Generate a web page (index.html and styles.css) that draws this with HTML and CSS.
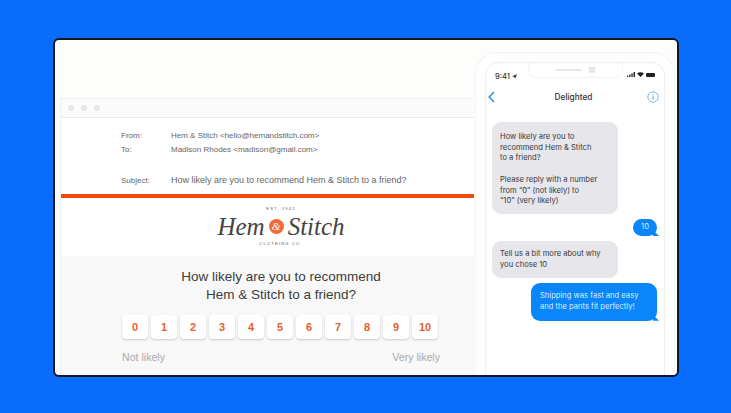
FILE: index.html
```html
<!DOCTYPE html>
<html lang="en">
<head>
  <meta charset="utf-8">
  <meta content="initial-scale=1" name="viewport">
  <title>Delighted - SMS and email survey</title>
  <link rel="stylesheet" href="styles.css">
</head>
<body>
  <main class="card">
    <section class="email">
      <div class="titlebar">
        <span class="dot"></span>
        <span class="dot"></span>
        <span class="dot"></span>
      </div>
      <div class="headers">
        <div class="hrow"><span class="hlabel">From:</span><span>Hem &amp; Stitch &lt;hello@hemandstitch.com&gt;</span></div>
        <div class="hrow"><span class="hlabel">To:</span><span>Madison Rhodes &lt;madison@gmail.com&gt;</span></div>
        <div class="hrow hsubject"><span class="hlabel">Subject:</span><span class="subject">How likely are you to recommend Hem &amp; Stitch to a friend?</span></div>
      </div>
      <div class="rule"></div>
      <div class="brand">
        <div class="brand-small">EST. 1942</div>
        <div class="brand-name">Hem <span class="amp">&amp;</span> Stitch</div>
        <div class="brand-small">CLOTHING CO.</div>
      </div>
      <div class="survey">
        <h2 class="question">How likely are you to recommend<br>Hem &amp; Stitch to a friend?</h2>
        <div class="scale">
          <span class="score">0</span>
          <span class="score">1</span>
          <span class="score">2</span>
          <span class="score">3</span>
          <span class="score">4</span>
          <span class="score">5</span>
          <span class="score">6</span>
          <span class="score">7</span>
          <span class="score">8</span>
          <span class="score">9</span>
          <span class="score">10</span>
        </div>
        <div class="scale-labels"><span>Not likely</span><span>Very likely</span></div>
      </div>
    </section>

    <section class="phone">
      <div class="screen">
        <div class="status">
          <span class="time">9:41 <svg width="5" height="5" viewBox="0 0 5 5"><path d="M0 2.6 5 0 3 5 2.4 2.9z" fill="#333"/></svg></span>
          <div class="notch"><span class="speaker"></span><span class="camera"></span></div>
          <span class="status-icons">
            <svg width="8" height="5" viewBox="0 0 8 5"><path d="M0 3.6h1.3V5H0zM2.2 2.6h1.3V5H2.2zM4.4 1.3h1.3V5H4.4zM6.6 0H8v5H6.6z" fill="#222"/></svg>
            <svg width="7" height="5" viewBox="0 0 7 5"><path d="M3.5 5 0 1.6a5 5 0 0 1 7 0z" fill="#222"/></svg>
            <svg width="9" height="4" viewBox="0 0 9 4"><rect width="9" height="4" rx="1" fill="#222"/></svg>
          </span>
        </div>
        <div class="navbar">
          <svg class="back" width="7" height="12" viewBox="0 0 7 12"><path d="M6 1 1.2 6 6 11" fill="none" stroke="#2f8fe8" stroke-width="1.5"/></svg>
          <span class="contact">Delighted</span>
          <svg class="info" width="12" height="12" viewBox="0 0 12 12"><circle cx="6" cy="6" r="5.2" fill="none" stroke="#5aa5ea" stroke-width=".8"/><path d="M6 5.2v3.4M6 3.2v1" stroke="#4a9be8" stroke-width="1"/></svg>
        </div>
        <div class="thread">
          <div class="bubble in first">How likely are you to<br>recommend Hem &amp; Stitch<br>to a friend?<br><br>Please reply with a number<br>from “0” (not likely) to<br>“10” (very likely)</div>
          <div class="bubble out short">10</div>
          <div class="bubble in">Tell us a bit more about why<br>you chose 10</div>
          <div class="bubble out">Shipping was fast and easy<br>and the pants fit perfectly!</div>
        </div>
      </div>
    </section>
  </main>
</body>
</html>
```

FILE: styles.css
```css
html, body { height: 100%; margin: 0; }
body { background: #0a6cfb; font-family: "Liberation Sans", sans-serif; overflow: hidden; padding: 38px 52px 0 53px; box-sizing: border-box; }

.card { background: #fdfdfb; border: 2px solid #101828; border-radius: 6px; box-sizing: border-box; display: flex; height: 339px; overflow: hidden; padding-left: 5px; width: 626px; }

/* Email window */
.email { background: #fff; border-left: 1px solid #f0f0f0; box-sizing: border-box; display: flex; flex-direction: column; flex: none; height: 279px; margin-top: 58px; width: 414px; }
.titlebar { align-items: center; background: #fbfbfb; border-bottom: 1px solid #e8e8e8; border-top: 1px solid #f0f0f0; box-sizing: border-box; display: flex; flex: none; gap: 7px; height: 20px; padding-left: 7px; }
.dot { background: #e6e6e6; border-radius: 50%; height: 6px; width: 6px; }
.headers { color: #666; flex: none; font-size: 8px; height: 76px; padding: 10px 0 0 60px; box-sizing: border-box; }
.hrow { align-items: center; display: flex; height: 14px; }
.hlabel { flex: none; width: 50px; }
.hsubject { margin-top: 17px; }
.subject { font-size: 9px; }
.rule { background: #f04a0c; flex: none; height: 4px; }
.brand { align-items: center; box-sizing: border-box; display: flex; flex: none; flex-direction: column; height: 58px; justify-content: center; padding: 0 0 2px 27px; }
.brand-small { color: #555; font-size: 4px; letter-spacing: 1.2px; line-height: 6px; }
.brand-name { align-items: center; color: #444; display: flex; font-family: "Liberation Serif", serif; font-size: 25px; font-style: italic; gap: 4px; line-height: 29px; }
.amp { align-items: center; background: #ee6c3c; border-radius: 50%; color: #fff; display: flex; font-size: 11px; height: 15px; justify-content: center; width: 15px; }

/* Survey block */
.survey { background: #f8f8f8; flex: 1; padding: 12px 0 0 61px; }
.question { color: #3c3c3c; font-size: 13.5px; font-weight: 400; line-height: 18px; margin: 0; text-align: center; width: 318px; }
.scale { display: flex; gap: 3px; margin-top: 11px; }
.score { align-items: center; background: #fff; border-radius: 4px; box-shadow: 0 1px 2px rgba(0, 0, 0, .2); color: #e9602c; display: flex; font-size: 11px; font-weight: 700; height: 24px; justify-content: center; width: 26px; }
.scale-labels { color: #aaa; display: flex; font-size: 10.6px; justify-content: space-between; margin-top: 12px; width: 318px; }

/* Phone */
.phone { background: #fefefe; border-left: 1px solid #f3f3f1; border-radius: 22px 22px 0 0; border-right: 1px solid #f3f3f1; border-top: 1px solid #f3f3f1; box-sizing: border-box; flex: none; height: 325px; margin-left: 1px; margin-top: 12px; padding: 9px 9px 0; width: 200px; }
.screen { background: #fff; border: 1px solid #efefef; border-bottom: 0; border-radius: 14px 14px 0 0; box-sizing: border-box; height: 100%; padding: 0 6px; }
.status { align-items: flex-start; display: grid; grid-template-columns: 1fr 95px 1fr; height: 25px; }
.time { color: #333; font-family: Inter, sans-serif; font-size: 7.5px; font-weight: 500; margin-top: 9px; padding-left: 3px; }
.notch { align-items: center; border: 1px solid #f4f4f4; border-radius: 0 0 8px 8px; border-top: 0; box-sizing: border-box; display: flex; gap: 8px; height: 15px; justify-content: center; }
.speaker { background: #e6e6e6; height: 2px; width: 25px; }
.camera { background: #e6e6e6; height: 6px; width: 6px; }
.status-icons { align-items: center; display: flex; gap: 2px; justify-self: end; margin-right: 3px; margin-top: 9px; }
.navbar { align-items: center; display: grid; grid-template-columns: 1fr auto 1fr; height: 18px; margin-left: -4px; margin-right: -1px; }
.contact { color: #333; font-family: Inter, sans-serif; font-size: 8.3px; font-weight: 500; }
.info { justify-self: end; }
.thread { display: flex; flex-direction: column; gap: 5px; margin-top: 16px; }
.bubble { border-radius: 9px; box-sizing: border-box; font-family: Inter, sans-serif; font-size: 7.6px; line-height: 10.7px; padding: 8px 8px; position: relative; width: 126px; }
.bubble.in { background: #e6e6eb; color: #3a3a3c; }
.bubble.first { padding-bottom: 7px; padding-top: 10px; }
.bubble.out { align-self: flex-end; background: #0a86fa; color: #d8edff; margin-right: 1px; padding-left: 9px; }
.bubble.out::after { background: #0a86fa; bottom: 0; clip-path: polygon(0 0, 100% 100%, 0 100%); content: ""; height: 6px; position: absolute; right: -2px; width: 6px; }
.bubble.short { align-items: center; display: flex; height: 17px; justify-content: center; padding: 0; width: 24px; }
```
